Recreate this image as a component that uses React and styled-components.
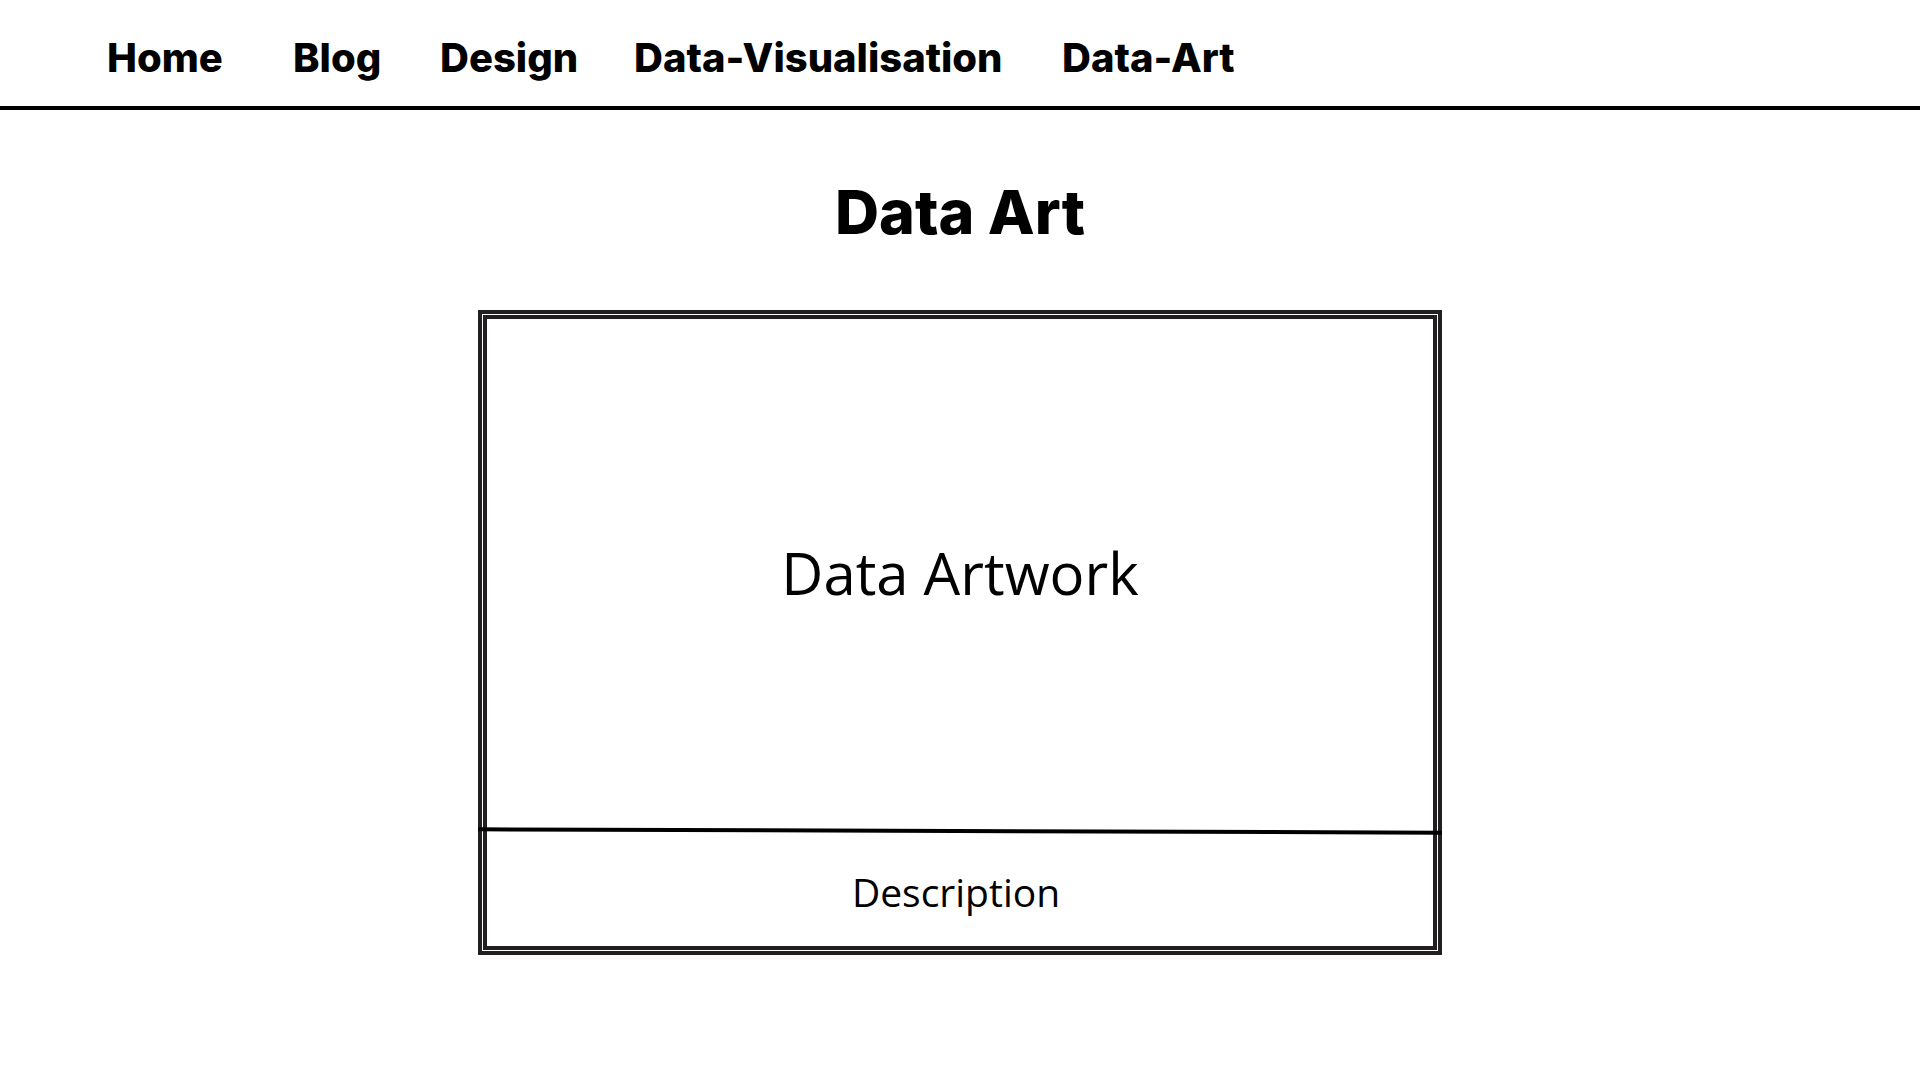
import React from 'react';
import styled, { createGlobalStyle } from 'styled-components';

const GlobalStyle = createGlobalStyle`
  *, *::before, *::after { box-sizing: border-box; }
  body {
    margin: 0;
    background: #fff;
    color: #000;
    font-family: 'Open Sans', 'Noto Sans', sans-serif;
  }
`;

const Header = styled.header`
  padding: 34px 24px 24px 107px;
  border-bottom: 4px solid #000;
`;

const Nav = styled.nav`
  display: grid;
  grid-template-columns: 186px 147px 194px 428px auto;
`;

const NavLink = styled.a`
  color: inherit;
  font: 800 40px/48px Inter, sans-serif;
  text-decoration: none;
  white-space: nowrap;
`;

const Main = styled.main`
  display: flex;
  flex-direction: column;
  align-items: center;
  gap: 60px;
  padding: 64px 24px;
`;

const Title = styled.h1`
  margin: 0;
  font: 800 61px/76px Inter, sans-serif;
`;

const Frame = styled.article`
  width: 100%;
  max-width: 964px;
  padding: 1px;
  border: 4px solid #231f20;
`;

const FrameInner = styled.div`
  border: 4px solid #231f20;
`;

const Artwork = styled.div`
  display: grid;
  place-items: center;
  min-height: 510px;
  padding-bottom: 2px;
`;

const ArtworkName = styled.h2`
  margin: 0;
  font-size: 58px;
  font-weight: 400;
  line-height: 76px;
`;

const Divider = styled.hr`
  height: 4px;
  margin: 0 -9px;
  border: 0;
  background: #000;
  transform: rotate(0.2deg);
`;

const Description = styled.p`
  display: grid;
  place-items: center;
  min-height: 113px;
  margin: 0;
  padding: 4px 8px 0 0;
  font-size: 39px;
  line-height: 48px;
`;

const LINKS = ['Home', 'Blog', 'Design', 'Data-Visualisation', 'Data-Art'];

export default function App() {
  return (
    <>
      <GlobalStyle />
      <Header>
        <Nav aria-label="Main">
          {LINKS.map((label) => (
            <NavLink key={label} href={`#${label.toLowerCase()}`}>{label}</NavLink>
          ))}
        </Nav>
      </Header>
      <Main>
        <Title>Data Art</Title>
        <Frame>
          <FrameInner>
            <Artwork>
              <ArtworkName>Data Artwork</ArtworkName>
            </Artwork>
            <Divider />
            <Description>Description</Description>
          </FrameInner>
        </Frame>
      </Main>
    </>
  );
}
